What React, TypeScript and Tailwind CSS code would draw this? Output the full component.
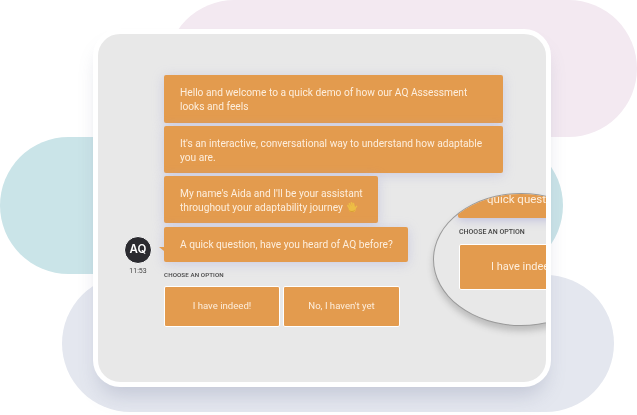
import React from "react";

const bubble =
  "rounded-[2px] bg-[#e39b4e] text-[#fdeedd] text-[10.2px] leading-[14px] pl-4 flex items-center whitespace-nowrap shadow-[0_2px_12px_rgba(160,160,215,0.4)]";

function Hand() {
  return (
    <svg width="12" height="12" viewBox="0 0 12 12" className="inline-block align-[-2px] ml-[3px]">
      <g stroke="#edbd45" strokeWidth="1.7" strokeLinecap="round" fill="none">
        <path d="M3.6 7.4 1.9 4.6" />
        <path d="M5 6 3.4 2.8" />
        <path d="M6.6 5.4 5.4 1.8" />
        <path d="M8 5.4 7.4 2.6" />
      </g>
      <ellipse cx="6.2" cy="7.9" rx="3.5" ry="3.2" fill="#edbd45" />
      <path d="M9 7.4 10.6 5.4" stroke="#edbd45" strokeWidth="1.5" strokeLinecap="round" />
      <path d="M3.4 9.6c1.4 1.3 3.8 1.3 5.2-.2" stroke="#c9892c" strokeWidth="0.6" fill="none" />
    </svg>
  );
}

export default function App() {
  return (
    <div
      className="relative w-[637px] h-[415px] overflow-hidden bg-white pt-[29px] pl-[93px]"
      style={{ fontFamily: "Roboto, 'Noto Sans', sans-serif" }}
    >
      <div className="absolute left-[166px] top-0 w-[471px] h-[137px] rounded-full bg-[#f3e9f1]" />
      <div className="absolute left-0 top-[137px] w-[563px] h-[137px] rounded-full bg-[#cae4e8]" />
      <div className="absolute left-[62px] top-[275px] w-[552px] h-[137px] rounded-full bg-[#e4e7ef]" />

      <div className="relative w-[458px] h-[358px] rounded-[27px] border-[5px] border-white bg-[#e8e8e8] overflow-hidden shadow-[0_14px_20px_-6px_rgba(110,120,150,0.28)] flex flex-col pt-[41px] pl-[26px] blur-[0.3px]">
        <div className="flex items-end">
          <div className="w-[40px] flex flex-col items-start mb-[-13px]">
            <div
              className="w-[28px] h-[28px] rounded-full bg-[#2b2b30] border border-white text-white text-[11.5px] font-semibold flex items-center justify-center leading-none"
              style={{ fontFamily: "Inter, sans-serif" }}
            >
              AQ
            </div>
            <div className="w-[28px] text-center text-[7px] leading-[8px] mt-[3px] text-[#444]">11:53</div>
          </div>
          <div className="flex flex-col gap-[3px] items-start">
            <div className={`${bubble} w-[339px] h-[48px] pt-[2px]`}>
              <span>
                Hello and welcome to a quick demo of how our AQ Assessment
                <br />
                looks and feels
              </span>
            </div>
            <div className={`${bubble} w-[339px] h-[47px] pt-[2px]`}>
              <span>
                It's an interactive, conversational way to understand how adaptable
                <br />
                you are.
              </span>
            </div>
            <div className={`${bubble} w-[214px] h-[47px] pt-[2px]`}>
              <span>
                My name's Aida and I'll be your assistant
                <br />
                throughout your adaptability journey
                <Hand />
              </span>
            </div>
            <div className={`${bubble} relative w-[244px] h-[35px] mt-[1px]`}>
              <span>A quick question, have you heard of AQ before?</span>
              <div className="absolute left-[-5px] top-[20px] w-0 h-0 border-t-[4px] border-t-[#e39b4e] border-l-[5px] border-l-transparent" />
            </div>
          </div>
        </div>

        <div className="ml-[40px] mt-[9px] text-[6.2px] leading-[8px] font-medium text-[#444] tracking-[0.1px]">
          CHOOSE AN OPTION
        </div>
        <div className="ml-[40px] mt-[7px] flex gap-[3px]">
          <div className="w-[116px] h-[41px] rounded-[2px] border-[1.5px] border-white bg-[#e39b4e] text-[#fdeedd] text-[9.6px] flex items-center justify-center">
            I have indeed!
          </div>
          <div className="w-[117px] h-[41px] rounded-[2px] border-[1.5px] border-white bg-[#e39b4e] text-[#fdeedd] text-[9.6px] flex items-center justify-center">
            No, I haven't yet
          </div>
        </div>

        {/* magnifier lens */}
        <div className="absolute left-[335px] top-[159px] w-[176px] h-[133px] rounded-[50%] border border-[#9a9a9a] bg-[#e8e8e8] overflow-hidden shadow-[0_5px_6px_rgba(90,90,90,0.3)]">
          <div className="absolute left-[24px] top-[-30px] w-[172px] h-[54px] rounded-[2px] bg-[#e39b4e] text-[#fdeedd] text-[11.5px] leading-[16px] shadow-[0_2px_10px_rgba(150,150,210,0.5)] pl-[29px] pt-[27px] whitespace-nowrap">
            quick question
          </div>
          <div className="absolute left-[25px] top-[34px] text-[7px] leading-[9px] font-medium text-[#444] whitespace-nowrap">
            CHOOSE AN OPTION
          </div>
          <div className="absolute left-[25px] top-[50px] w-[170px] h-[46px] rounded-[2px] border-[1.5px] border-white bg-[#e39b4e] text-[#fdeedd] text-[11px] flex items-center pl-[31px] whitespace-nowrap">
            I have indeed!
          </div>
        </div>
      </div>
    </div>
  );
}
